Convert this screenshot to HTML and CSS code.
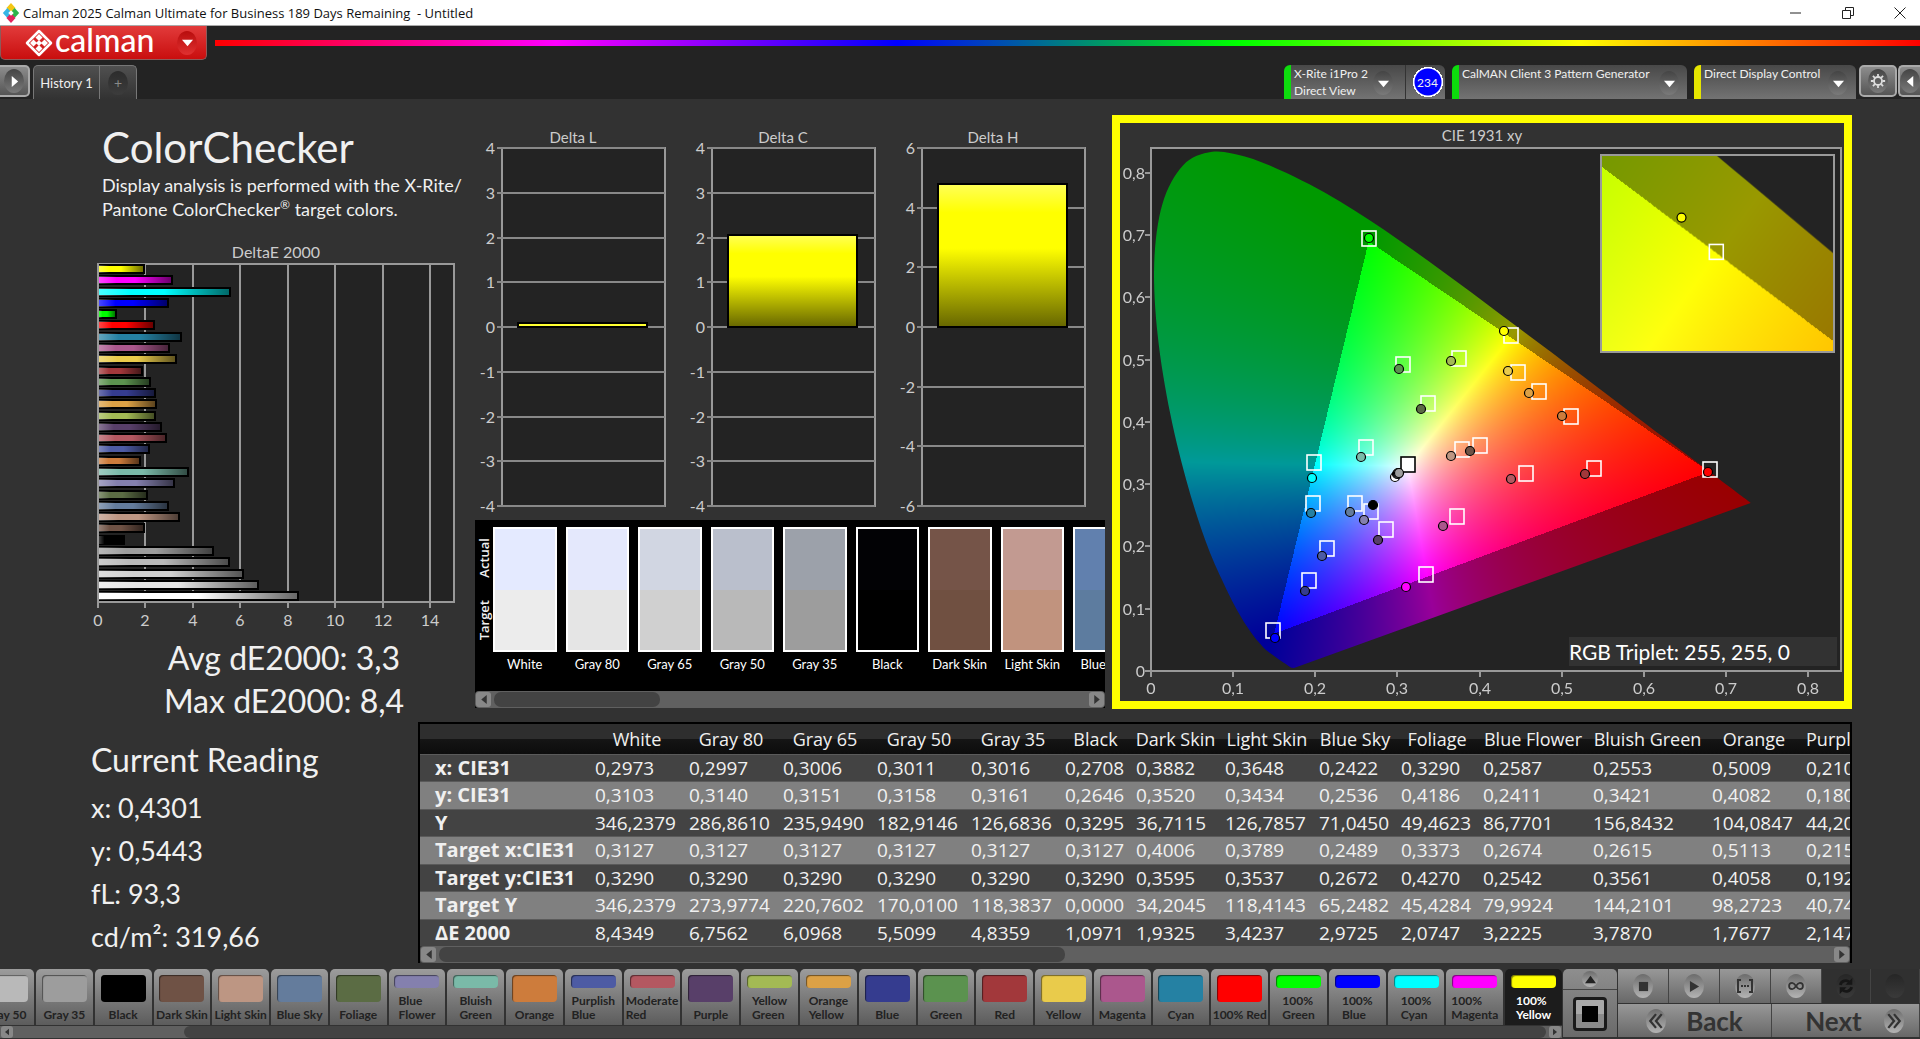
FILE: index.html
```html
<!DOCTYPE html>
<html lang="en">
<head>
  <meta charset="utf-8">
  <title>Calman 2025</title>
  <link rel="stylesheet" href="styles.css">
</head>
<body>
  <div class="titlebar">
    <svg class="app-icon" viewBox="0 0 18 22">
      <path d="M9 0l5 5.500-5 5.500-5-5.500z" fill="#f3c614"/>
      <path d="M13 5.500l5 5.500-5 5.500-5-5.500z" fill="#2fb34a"/>
      <path d="M5 5.500l5 5.500-5 5.500-5-5.500z" fill="#35b6e6"/>
      <path d="M9 11l5 5.500-5 5.500-5-5.500z" fill="#e3245c"/>
      <path d="M9 8l3 3-3 3-3-3z" fill="#fff"/>
    </svg>
    <span class="title-text">Calman 2025 Calman Ultimate for Business 189 Days Remaining&nbsp; - Untitled</span>
    <button class="win-btn" aria-label="Minimize"><svg viewBox="0 0 14 14"><path d="M1 7h11"/></svg></button>
    <button class="win-btn" aria-label="Restore"><svg viewBox="0 0 14 14"><path d="M1.500 4.500h8v8h-8zM4.500 4.500v-3h8v8h-3"/></svg></button>
    <button class="win-btn" aria-label="Close"><svg viewBox="0 0 14 14"><path d="M1.500 1.500l11 11M12.500 1.500l-11 11"/></svg></button>
  </div>

  <header class="header">
    <div class="brand-row">
      <button class="brand">
        <svg class="brand-icon" viewBox="0 0 28 28">
          <path d="M14 2L26 14 14 26 2 14z" fill="none" stroke="#fff" stroke-width="2.500" stroke-linejoin="round"/>
          <path d="M14 5l3.500 3.500-3.500 3.500-3.500-3.500zM8.500 10.500l3.500 3.500-3.500 3.500-3.500-3.500zM19.500 10.500l3.500 3.500-3.500 3.500-3.500-3.500zM14 16l3.500 3.500-3.500 3.500-3.500-3.500zM14 11l3 3-3 3-3-3z" fill="#fff"/>
        </svg>
        <span class="brand-name">calman</span>
        <span class="knob knob-red"><svg viewBox="0 0 12 8"><path d="M0 1h12L6 8z" fill="#fff"/></svg></span>
      </button>
      <div class="rainbow"></div>
    </div>
    <div class="tab-row">
      <button class="side-btn side-left" aria-label="Open panel"><span class="knob"><svg viewBox="0 0 8 12"><path d="M1 0v12l7-6z" fill="#fff"/></svg></span></button>
      <div class="history">
        <button class="history-tab">History 1</button>
        <button class="history-add"><span class="knob knob-dark">+</span></button>
      </div>
      <div class="devices">
        <button class="device green meter">
          <span>X-Rite i1Pro 2<br>Direct View</span>
          <span class="knob"><svg viewBox="0 0 12 8"><path d="M0 1h12L6 8z" fill="#fff"/></svg></span>
          <span class="count">234</span>
        </button>
        <button class="device green source">
          <span>CalMAN Client 3 Pattern Generator</span>
          <span class="knob"><svg viewBox="0 0 12 8"><path d="M0 1h12L6 8z" fill="#fff"/></svg></span>
        </button>
        <button class="device yellow display">
          <span>Direct Display Control</span>
          <span class="knob"><svg viewBox="0 0 12 8"><path d="M0 1h12L6 8z" fill="#fff"/></svg></span>
        </button>
      </div>
      <button class="side-btn" aria-label="Settings"><span class="knob"><svg class="gear" viewBox="0 0 18 18"><circle cx="9" cy="9" r="4.500" fill="none" stroke="#ddd" stroke-width="2"/><path d="M9 1v3M9 14v3M1 9h3M14 9h3M3.300 3.300l2.200 2.200M12.500 12.500l2.200 2.200M3.300 14.700l2.200-2.200M12.500 5.500l2.200-2.200" stroke="#ddd" stroke-width="2"/></svg></span></button>
      <button class="side-btn side-right" aria-label="Open side panel"><span class="knob"><svg viewBox="0 0 8 12"><path d="M7 0v12L0 6z" fill="#fff"/></svg></span></button>
    </div>
  </header>

  <main class="workspace">
    <section class="top">
      <div class="summary">
        <h1>ColorChecker</h1>
        <p class="intro">Display analysis is performed with the X-Rite/<br>Pantone ColorChecker<sup>®</sup> target colors.</p>
        <svg id="deltaE" class="chart" viewBox="0 0 380 392"></svg>
        <div class="stats">
          <p>Avg dE2000: 3,3</p>
          <p>Max dE2000: 8,4</p>
        </div>
      </div>

      <div class="middle">
        <div class="deltas">
          <svg id="deltaL" class="chart" viewBox="0 0 210 392"></svg>
          <svg id="deltaC" class="chart" viewBox="0 0 210 392"></svg>
          <svg id="deltaH" class="chart" viewBox="0 0 210 392"></svg>
        </div>
        <div class="compare">
          <div class="compare-body">
            <div class="compare-side"><span>Actual</span><span>Target</span></div>
            <div class="swatches" id="swatches"></div>
          </div>
          <div class="scrollbar">
            <button class="arrow" aria-label="Scroll left"><svg viewBox="0 0 8 12"><path d="M7 1v10L1 6z"/></svg></button>
            <div class="track"><div class="thumb thumb-compare"></div></div>
            <button class="arrow" aria-label="Scroll right"><svg viewBox="0 0 8 12"><path d="M1 1v10l6-5z"/></svg></button>
          </div>
        </div>
      </div>

      <div class="cie">
        <h2>CIE 1931 xy</h2>
        <div class="cie-plot">
          <canvas id="cieField" width="690" height="523"></canvas>
          <svg id="cieMarks" class="cie-marks" viewBox="0 0 690 523"></svg>
          <div class="inset">
            <canvas id="insetField" width="232" height="196"></canvas>
            <svg id="insetMarks" class="cie-marks" viewBox="0 0 232 196"></svg>
          </div>
          <div class="triplet">RGB Triplet: 255, 255, 0</div>
        </div>
      </div>
    </section>

    <section class="bottom">
      <div class="reading">
        <h2>Current Reading</h2>
        <p>x: 0,4301</p>
        <p>y: 0,5443</p>
        <p>fL: 93,3</p>
        <p>cd/m²: 319,66</p>
      </div>
      <div class="data">
        <div class="data-view">
          <table>
            <colgroup>
              <col class="w-name"><col class="w-std"><col class="w-std"><col class="w-std"><col class="w-std"><col class="w-std">
              <col class="w-black"><col class="w-dark"><col class="w-std"><col class="w-sky"><col class="w-sky"><col class="w-flower"><col class="w-green"><col class="w-std"><col class="w-last">
            </colgroup>
            <thead>
              <tr><th></th><th>White</th><th>Gray 80</th><th>Gray 65</th><th>Gray 50</th><th>Gray 35</th><th>Black</th><th>Dark Skin</th><th>Light Skin</th><th>Blue Sky</th><th>Foliage</th><th>Blue Flower</th><th>Bluish Green</th><th>Orange</th><th>Purplish Blue</th></tr>
            </thead>
            <tbody>
              <tr><th>x: CIE31</th><td>0,2973</td><td>0,2997</td><td>0,3006</td><td>0,3011</td><td>0,3016</td><td>0,2708</td><td>0,3882</td><td>0,3648</td><td>0,2422</td><td>0,3290</td><td>0,2587</td><td>0,2553</td><td>0,5009</td><td>0,210</td></tr>
              <tr><th>y: CIE31</th><td>0,3103</td><td>0,3140</td><td>0,3151</td><td>0,3158</td><td>0,3161</td><td>0,2646</td><td>0,3520</td><td>0,3434</td><td>0,2536</td><td>0,4186</td><td>0,2411</td><td>0,3421</td><td>0,4082</td><td>0,180</td></tr>
              <tr><th>Y</th><td>346,2379</td><td>286,8610</td><td>235,9490</td><td>182,9146</td><td>126,6836</td><td>0,3295</td><td>36,7115</td><td>126,7857</td><td>71,0450</td><td>49,4623</td><td>86,7701</td><td>156,8432</td><td>104,0847</td><td>44,20</td></tr>
              <tr><th>Target x:CIE31</th><td>0,3127</td><td>0,3127</td><td>0,3127</td><td>0,3127</td><td>0,3127</td><td>0,3127</td><td>0,4006</td><td>0,3789</td><td>0,2489</td><td>0,3373</td><td>0,2674</td><td>0,2615</td><td>0,5113</td><td>0,215</td></tr>
              <tr><th>Target y:CIE31</th><td>0,3290</td><td>0,3290</td><td>0,3290</td><td>0,3290</td><td>0,3290</td><td>0,3290</td><td>0,3595</td><td>0,3537</td><td>0,2672</td><td>0,4270</td><td>0,2542</td><td>0,3561</td><td>0,4058</td><td>0,192</td></tr>
              <tr><th>Target Y</th><td>346,2379</td><td>273,9774</td><td>220,7602</td><td>170,0100</td><td>118,3837</td><td>0,0000</td><td>34,2045</td><td>118,4143</td><td>65,2482</td><td>45,4284</td><td>79,9924</td><td>144,2101</td><td>98,2723</td><td>40,74</td></tr>
              <tr><th>ΔE 2000</th><td>8,4349</td><td>6,7562</td><td>6,0968</td><td>5,5099</td><td>4,8359</td><td>1,0971</td><td>1,9325</td><td>3,4237</td><td>2,9725</td><td>2,0747</td><td>3,2225</td><td>3,7870</td><td>1,7677</td><td>2,147</td></tr>
            </tbody>
          </table>
        </div>
        <div class="scrollbar">
          <button class="arrow" aria-label="Scroll left"><svg viewBox="0 0 8 12"><path d="M7 1v10L1 6z"/></svg></button>
          <div class="track"><div class="thumb thumb-data"></div></div>
          <button class="arrow" aria-label="Scroll right"><svg viewBox="0 0 8 12"><path d="M1 1v10l6-5z"/></svg></button>
        </div>
      </div>
    </section>
  </main>

  <footer class="footer">
    <div class="patterns">
      <div class="pattern-list" id="patterns"></div>
      <div class="scrollbar small">
        <button class="arrow" aria-label="Scroll left"><svg viewBox="0 0 8 12"><path d="M7 1v10L1 6z"/></svg></button>
        <div class="track"><div class="thumb thumb-patterns"></div></div>
        <button class="arrow" aria-label="Scroll right"><svg viewBox="0 0 8 12"><path d="M1 1v10l6-5z"/></svg></button>
      </div>
    </div>
    <div class="capture">
      <button class="capture-up" aria-label="Expand"><span class="knob knob-light"><svg viewBox="0 0 12 8"><path d="M0 8h12L6 0z" fill="#222"/></svg></span></button>
      <button class="capture-main" aria-label="Pattern window"><span class="capture-frame"><span class="capture-dot"></span></span></button>
    </div>
    <div class="controls">
      <div class="transport">
        <button aria-label="Stop"><span class="knob knob-light"><svg viewBox="0 0 12 12"><path d="M1 1h10v10H1z" fill="#333"/></svg></span></button>
        <button aria-label="Play"><span class="knob knob-light"><svg viewBox="0 0 12 12"><path d="M1 0v12l10-6z" fill="#333"/></svg></span></button>
        <button aria-label="Read series"><span class="knob knob-light"><svg class="wide" viewBox="0 0 16 12"><path d="M4 0H1v12h3M12 0h3v12h-3" fill="none" stroke="#333" stroke-width="2"/><path d="M4 5h2v2H4zM7 5h2v2H7zM10 5h2v2h-2z" fill="#333"/></svg></span></button>
        <button aria-label="Read continuous"><span class="knob knob-light"><svg class="wide" viewBox="0 0 18 12"><path d="M9 6C7 3 6 2.500 4.700 2.500a3.500 3.500 0 000 7C6 9.500 7 9 9 6s3-3.500 4.300-3.500a3.500 3.500 0 010 7C12 9.500 11 9 9 6z" fill="none" stroke="#333" stroke-width="2"/></svg></span></button>
        <button class="off" aria-label="Refresh"><span class="knob knob-off"><svg class="wide" viewBox="0 0 14 14"><path d="M2 6a5 5 0 018-2.500M12 8a5 5 0 01-8 2.500" fill="none" stroke="#161616" stroke-width="2.500"/><path d="M12.500 0v6h-6zM1.500 14V8h6z" fill="#161616"/></svg></span></button>
        <button class="off" aria-label="Unavailable"><span class="knob knob-off"></span></button>
      </div>
      <div class="nav">
        <button><span class="knob knob-light"><svg class="wide" viewBox="0 0 14 14"><path d="M7 1L2 7l5 6M12 1L7 7l5 6" fill="none" stroke="#333" stroke-width="2"/></svg></span>Back</button>
        <button class="next">Next<span class="knob knob-light"><svg class="wide" viewBox="0 0 14 14"><path d="M2 1l5 6-5 6M7 1l5 6-5 6" fill="none" stroke="#333" stroke-width="2"/></svg></span></button>
      </div>
    </div>
  </footer>
  <script src="script.js"></script>
</body>
</html>
```
FILE: styles.css
```css
* {
  box-sizing: border-box;
}

body {
  margin: 0;
  min-height: 100vh;
  display: flex;
  flex-direction: column;
  background-color: #323232;
  color: #f0f0f0;
  font-family: Lato, "Liberation Sans", sans-serif;
  overflow-x: hidden;
}

button {
  border: none;
  padding: 0;
  margin: 0;
  font-family: inherit;
  color: inherit;
  background: none;
  cursor: pointer;
}

h1, h2, p {
  margin: 0;
  font-weight: normal;
}

svg {
  display: block;
}

/* window title bar */
.titlebar {
  height: 26px;
  display: flex;
  align-items: center;
  background-color: #fff;
  color: #111;
  border-bottom: 1px solid #aaa;
}

.app-icon {
  width: 18px;
  height: 20px;
  margin: 0 3px 0 2px;
}

.title-text {
  flex: 1;
  font-family: "Open Sans", "Noto Sans", sans-serif;
  font-size: 13px;
}

.win-btn {
  width: 52px;
  height: 24px;
  display: flex;
  align-items: center;
  justify-content: center;
}

.win-btn:last-child {
  width: 46px;
  padding-left: 6px;
}

.win-btn svg {
  width: 14px;
  height: 14px;
  fill: none;
  stroke: #222;
}

/* header */
.header {
  background-color: #232323;
}

.brand-row {
  height: 39px;
  display: flex;
  align-items: flex-start;
}

.brand {
  width: 207px;
  height: 34px;
  display: flex;
  align-items: center;
  padding-left: 24px;
  border: 1px solid #8d5a5a;
  border-top: none;
  border-radius: 0 0 5px 5px;
  background: linear-gradient(#e23b3b, #c90e0e);
}

.brand-icon {
  width: 28px;
  height: 28px;
}

.brand-name {
  width: 98px;
  margin: 0 24px 6px 2px;
  font-size: 32px;
  line-height: 28px;
  font-weight: 500;
  color: #fff;
}

.rainbow {
  flex: 1;
  height: 6px;
  margin: 14px 0 0 8px;
  background: linear-gradient(90deg, #f00, #f0f, #00f, #0f0, #ff0, #f00);
}

.knob {
  width: 20px;
  height: 24px;
  flex: none;
  display: flex;
  align-items: center;
  justify-content: center;
  border-radius: 50%;
  background: linear-gradient(#444, #7a7a7a);
}

.knob svg {
  width: 11px;
  height: 11px;
}

.knob .gear,
.knob .wide {
  width: 16px;
  height: 16px;
}

.knob-red {
  background: linear-gradient(#b80d0d, #e03030);
}

.knob-dark {
  background: linear-gradient(#2c2c2c, #3c3c3c);
  color: #888;
  font-size: 14px;
}

.knob-light {
  background: linear-gradient(#6c6c6c, #b4b4b4);
}

.knob-off {
  background: linear-gradient(#262626, #3a3a3a);
}

.tab-row {
  height: 34px;
  display: flex;
  align-items: flex-start;
}

.side-btn {
  width: 38px;
  height: 32px;
  flex: none;
  display: flex;
  align-items: center;
  justify-content: center;
  border: 2px solid #aaa;
  border-radius: 5px;
  background: linear-gradient(#8c8c8c, #555);
}

.side-left {
  width: 30px;
  border-left: none;
  border-radius: 0 5px 5px 0;
}

.side-right {
  width: 22px;
  margin-left: 1px;
  border-right: none;
  border-radius: 5px 0 0 5px;
}

.history {
  height: 34px;
  display: flex;
  margin-left: 3px;
  border: 1px solid #777;
  border-bottom: none;
  border-radius: 5px 5px 0 0;
  background: linear-gradient(#505050, #323232);
}

.history-tab {
  width: 66px;
  font-size: 13px;
  border-right: 1px solid #777;
}

.history-add {
  width: 36px;
  display: flex;
  align-items: center;
  justify-content: center;
}

.devices {
  flex: 1;
  display: flex;
  justify-content: flex-end;
  gap: 7px;
  margin-right: 3px;
}

.device {
  height: 34px;
  display: flex;
  align-items: flex-start;
  padding-left: 3px;
  font-size: 12px;
  line-height: 17px;
  text-align: left;
  white-space: nowrap;
  border-left: 7px solid;
  border-radius: 6px 6px 0 0;
  background: linear-gradient(#484848, #737373);
}

.device .knob {
  margin: 6px 0 0 auto;
}

.green {
  border-left-color: #0ddc0d;
}

.yellow {
  border-left-color: #e6e600;
}

.meter {
  width: 161px;
}

.meter .knob {
  margin-right: 12px;
}

.source {
  width: 235px;
}

.display {
  width: 162px;
}

.source .knob,
.display .knob {
  margin-right: 8px;
}

.count {
  width: 40px;
  height: 34px;
  display: flex;
  align-items: center;
  justify-content: center;
  padding-left: 4px;
  font-size: 12px;
  border-left: 1px solid #333;
  background: radial-gradient(circle at 22px 17px, #00f 13px, #fff 14px, #fff 15px, transparent 15px);
}

/* workspace */
.workspace {
  flex: 1;
  padding: 16px 68px 0 0;
}

.top {
  display: grid;
  grid-template-columns: minmax(0, 468fr) minmax(0, 630fr) minmax(0, 740fr);
  column-gap: 7px;
}

.summary {
  padding-left: 88px;
}

h1 {
  padding: 6px 0 0 14px;
  font-size: 42px;
  line-height: 52px;
}

.intro {
  padding-left: 14px;
  font-size: 18px;
  line-height: 24px;
  margin-bottom: 19px;
}

.intro sup {
  font-size: 12px;
  line-height: 0;
}

.chart {
  width: 100%;
  font-size: 15px;
  fill: #ccc;
}

.stats {
  padding: 4px 0 0 12px;
  font-size: 32px;
  line-height: 43px;
  text-align: center;
}

.deltas {
  display: grid;
  grid-template-columns: repeat(3, 1fr);
  padding: 8px 0 5px;
}

.compare {
  background-color: #000;
}

.compare-body {
  height: 171px;
  display: flex;
  padding-top: 7px;
}

.compare-side {
  width: 18px;
  height: 125px;
  display: flex;
  flex-direction: column;
  justify-content: space-around;
  font-family: "Open Sans", sans-serif;
  font-size: 13px;
  font-weight: 600;
  line-height: 18px;
}

.compare-side span {
  writing-mode: vertical-rl;
  transform: rotate(180deg);
}

.swatches {
  flex: 1;
  min-width: 0;
  display: grid;
  grid-template-columns: repeat(8, minmax(0, 1fr)) 32px;
  column-gap: 9px;
  overflow: hidden;
}

.swatch {
  font-size: 13px;
  line-height: 24px;
  text-align: center;
  color: #fff;
  white-space: nowrap;
}

.swatch:last-child {
  width: 64px;
}

.swatch-color {
  height: 125px;
  border: 2px solid #fff;
}

.scrollbar {
  height: 17px;
  display: flex;
  align-items: center;
  gap: 3px;
  padding: 0 1px;
  border-radius: 4px;
  background-color: #606060;
}

.arrow {
  width: 15px;
  height: 15px;
  display: flex;
  align-items: center;
  justify-content: center;
  border-radius: 3px;
  background-color: #888;
}

.arrow svg {
  width: 8px;
  height: 11px;
  fill: #333;
}

.track {
  flex: 1;
}

.thumb {
  height: 15px;
  border-radius: 7px;
  background-color: #434343;
}

.thumb-compare {
  width: 28%;
}

.thumb-data {
  width: 45%;
}

.thumb-patterns {
  width: 89%;
  margin-left: 11%;
}

/* chromaticity diagram */
.cie {
  align-self: start;
  padding: 0 3px 30px 31px;
  border: 8px solid #ff0;
}

.cie h2 {
  padding-right: 28px;
  font-size: 15px;
  line-height: 25px;
  text-align: center;
  color: #ccc;
}

.cie-plot {
  position: relative;
  background-color: #232323;
}

.cie-plot canvas {
  display: block;
  width: 100%;
}

.cie-marks {
  position: absolute;
  top: 0;
  left: 0;
  width: 100%;
  overflow: visible;
  font-size: 16px;
  fill: #ccc;
}

.inset {
  position: absolute;
  top: 6px;
  right: 6px;
  width: 34%;
  border: 2px solid #999;
  background-color: #232323;
}

.triplet {
  position: absolute;
  right: 4px;
  bottom: 5px;
  width: 268px;
  font-size: 21px;
  line-height: 29px;
  color: #fff;
  background-color: #323232;
}

/* current reading and table */
.bottom {
  display: grid;
  grid-template-columns: 418fr 1434fr;
}

.reading {
  padding: 16px 0 0 91px;
  font-size: 27px;
  line-height: 43px;
}

.reading h2 {
  font-size: 32px;
  margin-bottom: 5px;
}

.data {
  min-width: 0;
  border: 2px solid #000;
  border-bottom: none;
}

.data-view {
  overflow: hidden;
}

table {
  width: 1502px;
  height: 222px;
  table-layout: fixed;
  border-collapse: collapse;
  font-family: "Open Sans", "Noto Sans", sans-serif;
  font-size: 19px;
  line-height: 24px;
}

.w-name { width: 170px; }
.w-std { width: 94px; }
.w-black { width: 71px; }
.w-dark { width: 89px; }
.w-sky { width: 82px; }
.w-flower { width: 110px; }
.w-green { width: 119px; }
.w-last { width: 121px; }

th,
td {
  padding: 0 0 0 5px;
  text-align: left;
  white-space: nowrap;
}

thead tr {
  height: 30px;
  background: linear-gradient(#2e2e2e 50%, #151515 50%, #0c0c0c);
}

thead th {
  padding: 0;
  font-weight: normal;
  font-size: 18px;
  text-align: center;
}

tbody tr {
  background-color: #434343;
  border-top: 1px solid #5a5a5a;
}

tbody tr:nth-child(even) {
  background-color: #808080;
}

tbody th {
  padding-left: 15px;
  font-size: 20px;
}

/* footer */
.footer {
  height: 70px;
  display: flex;
  gap: 1px;
}

.patterns {
  flex: 1;
  min-width: 0;
}

.pattern-list {
  display: grid;
  grid-template-columns: 34px repeat(26, minmax(0, 1fr));
  column-gap: 2px;
  height: 56px;
  overflow: hidden;
}

.pattern {
  height: 56px;
  display: flex;
  flex-direction: column;
  align-items: center;
  gap: 6px;
  padding: 6px 0 3px;
  font-size: 12px;
  font-weight: bold;
  line-height: 14px;
  text-align: left;
  white-space: nowrap;
  color: #222;
  border-radius: 5px 5px 0 0;
  background: linear-gradient(#9c9c9c, #5c5c5c);
}

.pattern:first-child {
  width: 57px;
  justify-self: end;
}

.pattern-color {
  flex: 1;
  width: 45px;
  border-radius: 4px;
  box-shadow: inset 1px 1px 1px rgba(0, 0, 0, 0.5);
}

.pattern.selected {
  color: #fff;
  background: #1c1c1c;
}

.small {
  height: 12px;
  margin-top: 1px;
  border-radius: 0;
}

.small .arrow {
  width: 12px;
  height: 12px;
}

.small .arrow svg {
  width: 6px;
  height: 8px;
}

.small .thumb {
  height: 12px;
}

.capture {
  width: 54px;
  height: 68px;
  display: flex;
  flex-direction: column;
  border-radius: 5px 5px 0 0;
  background: linear-gradient(#8e8e8e, #6a6a6a);
}

.capture-up {
  height: 21px;
  display: flex;
  align-items: center;
  justify-content: center;
  border-bottom: 1px solid #444;
}

.capture-up .knob {
  width: 16px;
  height: 16px;
}

.capture-main {
  flex: 1;
  display: flex;
  align-items: center;
  justify-content: center;
}

.capture-frame {
  width: 34px;
  height: 34px;
  display: flex;
  align-items: center;
  justify-content: center;
  border: 3px solid #1a1a1a;
  border-radius: 4px;
  background: linear-gradient(#a8a8a8 50%, #8a8a8a 50%);
}

.capture-dot {
  width: 16px;
  height: 16px;
  background-color: #000;
}

.controls {
  width: 302px;
  height: 68px;
  display: flex;
  flex-direction: column;
  gap: 1px;
}

.transport {
  height: 34px;
  display: grid;
  grid-template-columns: repeat(4, 51px) 1fr 1fr;
}

.transport button,
.nav button {
  display: flex;
  align-items: center;
  justify-content: center;
  border-right: 1px solid #444;
  background: linear-gradient(#989898, #686868);
}

.transport .off {
  background: #303030;
}

.nav {
  flex: 1;
  display: grid;
  grid-template-columns: 154px 1fr;
}

.nav button {
  gap: 20px;
  font-size: 26px;
  font-weight: bold;
  color: #333;
}

.nav .next {
  gap: 22px;
  padding-left: 18px;
}
```
FILE: script.js
```js
// name, color, dE2000, measured x/y, target x/y
const patches = [
  ['White', '#ffffff', 8.43, .2973, .3103, .3127, .3290],
  ['Gray 80', '#e6e6e6', 6.76, .2997, .3140, .3127, .3290],
  ['Gray 65', '#d0d0d0', 6.10, .3006, .3151, .3127, .3290],
  ['Gray 50', '#b9b9b9', 5.51, .3011, .3158, .3127, .3290],
  ['Gray 35', '#9d9d9d', 4.84, .3016, .3161, .3127, .3290],
  ['Black', '#000000', 1.10, .2708, .2646, .3127, .3290],
  ['Dark Skin', '#6f5245', 1.93, .3882, .3520, .4006, .3595],
  ['Light Skin', '#bd9683', 3.42, .3648, .3434, .3789, .3537],
  ['Blue Sky', '#647c9c', 2.97, .2422, .2536, .2489, .2672],
  ['Foliage', '#5b6c44', 2.07, .3290, .4186, .3373, .4270],
  ['Blue Flower', '#8480ae', 3.22, .2587, .2411, .2674, .2542],
  ['Bluish Green', '#7abaa8', 3.79, .2553, .3421, .2615, .3561],
  ['Orange', '#cd7c3c', 1.77, .5009, .4082, .5113, .4058],
  ['Purplish Blue', '#4d5ba4', 2.15, .2087, .1830, .2146, .1940],
  ['Moderate Red', '#b45861', 2.87, .4383, .3063, .4560, .3156],
  ['Purple', '#583f69', 2.65, .2760, .2081, .2866, .2244],
  ['Yellow Green', '#a3ba54', 2.40, .3657, .4970, .3751, .4990],
  ['Orange Yellow', '#dca146', 2.45, .4596, .4451, .4720, .4463],
  ['Blue', '#353c8f', 2.40, .1874, .1262, .1927, .1437],
  ['Green', '#5b924f', 2.20, .3019, .4832, .3072, .4894],
  ['Red', '#a2383b', 1.85, .5281, .3150, .5387, .3231],
  ['Yellow', '#e9cb4b', 3.30, .4348, .4800, .4472, .4763],
  ['Magenta', '#ab578d', 3.00, .3551, .2319, .3728, .2456],
  ['Cyan', '#2581a3', 3.50, .1945, .2525, .1974, .2669],
  ['100% Red', '#ff0000', 2.35, .6780, .3180, .6800, .3220],
  ['100% Green', '#00ff00', .75, .2648, .6944, .2648, .6920],
  ['100% Blue', '#0000ff', 2.95, .1508, .0519, .1485, .0619],
  ['100% Cyan', '#00ffff', 5.58, .1963, .3080, .1990, .3330],
  ['100% Magenta', '#ff00ff', 3.12, .3108, .1337, .3350, .1525],
  ['100% Yellow', '#ffff00', 1.95, .4301, .5443, .4379, .5370]
];

// swatches with actual and target colors
const swatches = [
  ['White', '#e4eaff', '#ececec'],
  ['Gray 80', '#e4e8fc', '#e5e5e5'],
  ['Gray 65', '#d1d6e2', '#d0d0d0'],
  ['Gray 50', '#babfcc', '#b9b9b9'],
  ['Gray 35', '#9ca1aa', '#9d9d9d'],
  ['Black', '#020205', '#000000'],
  ['Dark Skin', '#755448', '#705041'],
  ['Light Skin', '#c29a91', '#c1937e'],
  ['Blue Sky', '#6180ae', '#5d7c9f']
];

document.getElementById('swatches').innerHTML = swatches.map(s =>
  `<div class="swatch"><div class="swatch-color" style="background:linear-gradient(${s[1]} 50%, ${s[2]} 50%)"></div>${s[0]}</div>`
).join('');

// pattern buttons start at the partly scrolled Gray 50
const oneLine = ['Gray 50', 'Gray 35', 'Dark Skin', 'Light Skin', 'Blue Sky', '100% Red'];
document.getElementById('patterns').innerHTML = patches.slice(3).map(p => {
  const label = oneLine.includes(p[0]) ? p[0] : p[0].replace(' ', '<br>');
  const selected = p[0] === '100% Yellow' ? ' selected' : '';
  return `<button class="pattern${selected}"><span class="pattern-color" style="background-color:${p[1]}"></span><span>${label}</span></button>`;
}).join('');

// horizontal dE bars
function drawDeltaE() {
  const unit = 356 / 15;
  let out = '<text x="188" y="18" text-anchor="middle" font-size="16">DeltaE 2000</text>';
  out += '<rect x="10" y="24" width="356" height="338" fill="#232323" stroke="#999" stroke-width="2"/>';
  for (let v = 0; v <= 14; v += 2) {
    const x = Math.round(10 + v * unit);
    out += `<path d="M${x} 24V368" stroke="#999" stroke-width="2"/>`;
    out += `<text x="${x}" y="386" text-anchor="middle" font-size="16">${v}</text>`;
  }
  out += '<defs><linearGradient id="shadeX"><stop offset="0" stop-color="#fff" stop-opacity=".3"/><stop offset=".25" stop-color="#fff" stop-opacity="0"/><stop offset=".5" stop-opacity="0"/><stop offset="1" stop-opacity=".6"/></linearGradient></defs>';
  patches.slice().reverse().forEach((p, i) => {
    const y = Math.round(25 + i * 11.28);
    const size = `x="10" y="${y}" width="${Math.round(p[2] * unit)}" height="8"`;
    out += `<rect ${size} fill="${p[1]}" stroke="#000" stroke-width="2"/><rect ${size} fill="url(#shadeX)"/>`;
  });
  out += '<path d="M10 24V368" stroke="#999" stroke-width="2"/>';
  document.getElementById('deltaE').innerHTML = out;
}

// vertical delta chart, range is -max..max
function drawDelta(id, title, max, step, value) {
  const zero = 204;
  const unit = 179 / max;
  let out = `<text x="98" y="20" text-anchor="middle">${title}</text>`;
  out += '<rect x="27" y="25" width="163" height="358" fill="#232323" stroke="#999" stroke-width="2"/>';
  for (let v = -max; v <= max; v += step) {
    const y = Math.round(zero - v * unit);
    out += `<path d="M22 ${y}H190" stroke="#888" stroke-width="2"/>`;
    out += `<text x="20" y="${y + 6}" text-anchor="end" font-size="16">${v}</text>`;
  }
  const h = Math.round(value * unit);
  out += `<defs><linearGradient id="${id}Fill" x2="0" y2="1"><stop offset="0" stop-color="#ffff58"/><stop offset=".2" stop-color="#ff0"/><stop offset=".45" stop-color="#ff0"/><stop offset="1" stop-color="#666600"/></linearGradient></defs>`;
  out += `<rect x="43" y="${zero - h}" width="129" height="${h}" fill="${h < 8 ? '#ffff30' : `url(#${id}Fill)`}" stroke="#000" stroke-width="2"/>`;
  document.getElementById(id).innerHTML = out;
}

// CIE 1931 spectral locus
const locus = [
  [.1741, .0050], [.1714, .0051], [.1689, .0069], [.1644, .0109], [.1566, .0177], [.1440, .0297],
  [.1355, .0399], [.1241, .0578], [.1096, .0868], [.0913, .1327], [.0687, .2007], [.0454, .2950],
  [.0235, .4127], [.0082, .5384], [.0039, .6548], [.0139, .7502], [.0389, .8120], [.0743, .8338],
  [.1142, .8262], [.1547, .8059], [.1929, .7816], [.2296, .7543], [.2658, .7243], [.3016, .6923],
  [.3373, .6589], [.3731, .6245], [.4087, .5896], [.4441, .5547], [.4788, .5202], [.5125, .4866],
  [.5752, .4242], [.6270, .3725], [.6658, .3340], [.6915, .3083], [.7190, .2809], [.7300, .2700]
];

// xy to display color, dimmed outside the P3 triangle
function fieldColor(x, y) {
  const X = x / y, Z = (1 - x - y) / y;
  let rgb = [
    2.4935 * X - .9314 - .4027 * Z,
    -.8295 * X + 1.7627 + .0236 * Z,
    .0358 * X - .0762 + .9569 * Z
  ];
  const dim = Math.min(...rgb) < 0 ? .6 : 1;
  const top = Math.max(...rgb);
  return rgb.map(c => Math.max(0, c / top) * 255 * dim);
}

function drawField(id, x0, y0, spanX, spanY) {
  const canvas = document.getElementById(id);
  const w = canvas.width, h = canvas.height;
  const layer = document.createElement('canvas');
  layer.width = w;
  layer.height = h;
  const lctx = layer.getContext('2d');
  const img = lctx.createImageData(w, h);
  for (let j = 0; j < h; j++) {
    for (let i = 0; i < w; i++) {
      const c = fieldColor(x0 + (i + .5) / w * spanX, y0 + (h - j - .5) / h * spanY);
      img.data.set([c[0], c[1], c[2], 255], (j * w + i) * 4);
    }
  }
  lctx.putImageData(img, 0, 0);

  const ctx = canvas.getContext('2d');
  const pts = locus.map(p => [(p[0] - x0) / spanX * w, h - (p[1] - y0) / spanY * h]);
  ctx.beginPath();
  ctx.moveTo(...pts[0]);
  for (let k = 0; k < pts.length - 1; k++) {
    const a = pts[k - 1] || pts[k], b = pts[k], c = pts[k + 1], d = pts[k + 2] || c;
    ctx.bezierCurveTo(b[0] + (c[0] - a[0]) / 6, b[1] + (c[1] - a[1]) / 6,
      c[0] - (d[0] - b[0]) / 6, c[1] - (d[1] - b[1]) / 6, c[0], c[1]);
  }
  ctx.closePath();
  ctx.clip();
  ctx.drawImage(layer, 0, 0);
}

function square(x, y, stroke, fill) {
  return `<rect x="${Math.round(x) - 7}" y="${Math.round(y) - 9}" width="14" height="15" fill="${fill || 'none'}" stroke="${stroke}" stroke-width="1.6"/>`;
}

function dot(x, y, color) {
  return `<circle cx="${Math.round(x)}" cy="${Math.round(y) - 1}" r="4.5" fill="${color}" stroke="#000" stroke-width="1.2"/>`;
}

function drawCie() {
  const ux = 690 / .84, uy = 523 / .84;
  let out = '<rect width="690" height="523" fill="none" stroke="#999" stroke-width="2"/>';
  for (let t = 0; t <= 8; t++) {
    const label = t ? '0,' + t : '0';
    const x = Math.round(t * ux / 10), y = Math.round(523 - t * uy / 10);
    out += `<path d="M${x} 523v6M0 ${y}h-6" stroke="#999" stroke-width="2"/>`;
    out += `<text x="${x}" y="546" text-anchor="middle">${label}</text>`;
    out += `<text x="-6" y="${y + 6}" text-anchor="end">${label}</text>`;
  }
  patches.slice(6).forEach(p => { out += square(p[5] * ux, 523 - p[6] * uy, '#fff'); });
  out += square(.3127 * ux, 523 - .329 * uy, '#000', '#fff');
  patches.forEach(p => { out += dot(p[3] * ux, 523 - p[4] * uy, p[1]); });
  document.getElementById('cieMarks').innerHTML = out;
  document.getElementById('insetMarks').innerHTML = square(115, 98, '#fff') + dot(80, 63, '#ff0');
}

drawDeltaE();
drawDelta('deltaL', 'Delta L', 4, 1, .1);
drawDelta('deltaC', 'Delta C', 4, 1, 2.06);
drawDelta('deltaH', 'Delta H', 6, 2, 4.8);
drawField('cieField', 0, 0, .84, .84);
drawField('insetField', .4129, .5109, .05, .05);
drawCie();
```
